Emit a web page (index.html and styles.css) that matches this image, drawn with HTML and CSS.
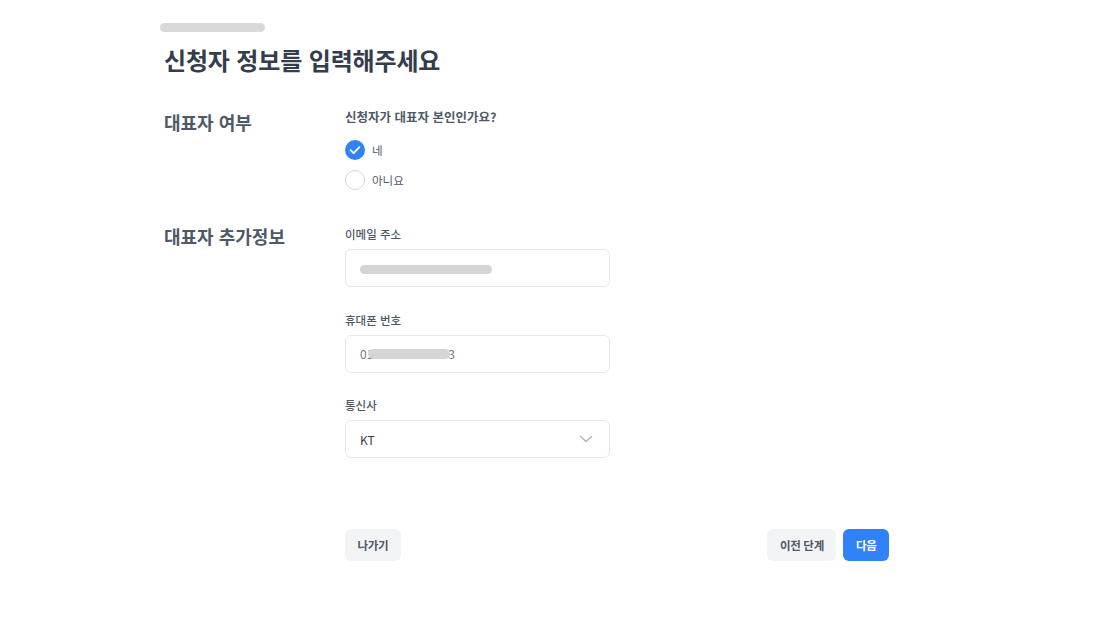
FILE: index.html
```html
<!DOCTYPE html>
<html lang="ko">
<head>
<meta charset="utf-8">
<title>신청자 정보</title>
<link rel="stylesheet" href="styles.css">
</head>
<body>
<div class="page">
  <div class="crumb"></div>
  <h1 class="title">신청자 정보를 입력해주세요</h1>

  <section class="row row-rep">
    <h2 class="sec-label">대표자 여부</h2>
    <div class="sec-body">
      <p class="question">신청자가 대표자 본인인가요?</p>
      <div class="radios">
        <label class="radio">
          <span class="dot dot-on">
            <svg viewBox="0 0 20 20" width="20" height="20"><path d="M5.6 10.2l3 3 5.8-6" fill="none" stroke="#fff" stroke-width="1.8" stroke-linecap="round" stroke-linejoin="round"/></svg>
          </span>
          <span class="radio-text">네</span>
        </label>
        <label class="radio">
          <span class="dot"></span>
          <span class="radio-text">아니요</span>
        </label>
      </div>
    </div>
  </section>

  <section class="row row-info">
    <h2 class="sec-label">대표자 추가정보</h2>
    <div class="sec-body fields">
      <div class="field">
        <div class="field-label">이메일 주소</div>
        <div class="input"><span class="blur blur-email"></span></div>
      </div>
      <div class="field">
        <div class="field-label">휴대폰 번호</div>
        <div class="input"><span class="phone">01</span><span class="blur blur-phone"></span><span class="phone">3</span></div>
      </div>
      <div class="field">
        <div class="field-label">통신사</div>
        <div class="input select">
          <span>KT</span>
          <svg class="chev" viewBox="0 0 14 8" width="14" height="8"><path d="M1.5 1.5l5.5 5 5.5-5" fill="none" stroke="#b0b8c1" stroke-width="1.6" stroke-linecap="round" stroke-linejoin="round"/></svg>
        </div>
      </div>
    </div>
  </section>

  <div class="actions">
    <button class="btn btn-gray">나가기</button>
    <div class="actions-right">
      <button class="btn btn-gray">이전 단계</button>
      <button class="btn btn-blue">다음</button>
    </div>
  </div>
</div>
</body>
</html>
```
FILE: styles.css
```css
* { box-sizing: border-box; }
html, body { margin: 0; padding: 0; background: #fff; }
body {
  font-family: "Noto Sans CJK KR", "Noto Sans", sans-serif;
  color: #4e5968;
}
.page {
  padding: 23px 0 0 164px;
  width: 889px;
}
.crumb {
  width: 105px;
  height: 9px;
  border-radius: 5px;
  background: #d8d9db;
  margin-left: -4px;
}
.title {
  margin: 12px 0 0;
  font-size: 24px;
  line-height: 32px;
  font-weight: 700;
  color: #333d4b;
  letter-spacing: -0.15px;
}
.row {
  display: grid;
  grid-template-columns: 181px 265px;
}
.row-rep { margin-top: 31px; }
.row-info { margin-top: 35px; }
.sec-label {
  margin: 0;
  font-size: 18px;
  line-height: 24px;
  font-weight: 700;
  color: #4e5968;
}
.row-rep .sec-label { margin-top: 3px; }
.row-info .sec-label { margin-top: -1px; }
.question {
  margin: 0;
  font-size: 12.5px;
  line-height: 20px;
  font-weight: 700;
  color: #4e5968;
}
.radios {
  margin-top: 13px;
  display: flex;
  flex-direction: column;
  gap: 10px;
}
.radio {
  display: flex;
  align-items: center;
  gap: 7px;
  height: 20px;
}
.dot {
  width: 20px;
  height: 20px;
  border-radius: 50%;
  border: 1px solid #d1d6db;
  background: #fff;
  display: flex;
  align-items: center;
  justify-content: center;
}
.dot-on {
  border: none;
  background: #3182f6;
}
.radio-text {
  font-size: 11.5px;
  color: #4e5968;
}
.fields {
  display: flex;
  flex-direction: column;
  gap: 23.5px;
}
.field-label {
  font-size: 11.5px;
  line-height: 18px;
  font-weight: 500;
  color: #4e5968;
  margin-bottom: 6px;
}
.input {
  height: 38px;
  border: 1px solid #e5e8eb;
  border-radius: 6px;
  display: flex;
  align-items: center;
  padding: 0 14px;
  font-size: 12px;
  color: #333d4b;
}
.blur {
  display: block;
  height: 9px;
  border-radius: 5px;
  background: #d4d5d7;
}
.blur-email { width: 132px; margin-top: 2px; }
.phone { color: #6b7684; }
.blur-phone { width: 82px; margin: 0 -2px 0 -5px; height: 10px; }
.select { justify-content: space-between; padding-right: 16px; }
.chev { display: block; }
.actions {
  margin-top: 71px;
  margin-left: 181px;
  display: flex;
  justify-content: space-between;
}
.actions-right { display: flex; gap: 7px; }
.btn {
  height: 32px;
  border: none;
  border-radius: 6px;
  padding: 0 12.5px;
  font-family: inherit;
  font-size: 11.5px;
  font-weight: 700;
  letter-spacing: -0.3px;
  cursor: pointer;
}
.btn-gray { background: #f2f4f6; color: #4e5968; }
.btn-blue { background: #3182f6; color: #fff; }
```
